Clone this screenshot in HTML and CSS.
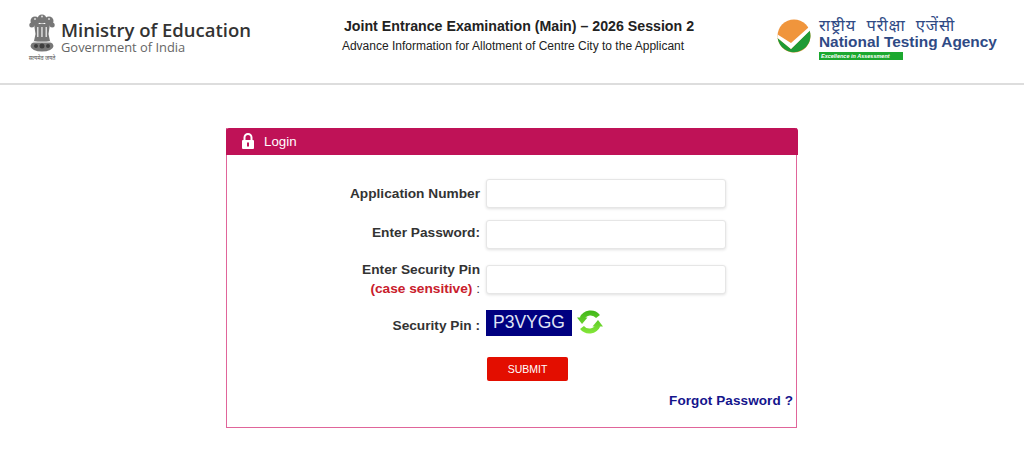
FILE: index.html
```html
<!DOCTYPE html>
<html>
<head>
    <title>JEE (Main) - Advance Information for Allotment of Centre City</title>
    <link rel="stylesheet" href="styles.css">
</head>
<body>
    <header class="site-header">
        <div class="moe-logo">
            <div class="emblem-box">
                <svg width="26" height="40" viewBox="0 0 26 40">
                    <g fill="#777">
                        <circle cx="13" cy="5" r="4.500"/>
                        <circle cx="6" cy="7" r="4.500"/>
                        <circle cx="20" cy="7" r="4.500"/>
                        <circle cx="2.800" cy="11" r="2.500"/>
                        <circle cx="23.200" cy="11" r="2.500"/>
                        <path d="M5 10h16l-1.500 10 1.500 7H5l1.500-7z"/>
                        <ellipse cx="13" cy="32" rx="11.500" ry="5.500"/>
                    </g>
                    <g fill="#dcdcdc">
                        <rect x="8" y="13" width="1.500" height="10"/>
                        <rect x="12.200" y="13" width="1.500" height="10"/>
                        <rect x="16.500" y="13" width="1.500" height="10"/>
                        <circle cx="13" cy="2.500" r="1"/>
                        <circle cx="6" cy="5" r="1"/>
                        <circle cx="20" cy="5" r="1"/>
                        <rect x="4" y="27.500" width="18" height="1.200"/>
                    </g>
                    <g fill="#3e3e3e">
                        <circle cx="7" cy="32" r="2"/>
                        <circle cx="13" cy="32" r="2.500"/>
                        <circle cx="19" cy="32" r="2"/>
                    </g>
                </svg>
                <div class="emblem-caption">सत्यमेव जयते</div>
            </div>
            <div class="moe-text">
                <div class="moe-title">Ministry of Education</div>
                <div class="moe-sub">Government of India</div>
            </div>
        </div>
        <div class="exam-title">
            <div class="exam-name">Joint Entrance Examination (Main) – 2026 Session 2</div>
            <div class="exam-desc">Advance Information for Allotment of Centre City to the Applicant</div>
        </div>
        <div class="nta-logo">
            <svg width="34" height="34" viewBox="0 0 34 34">
                <circle cx="17" cy="17" r="16.500" fill="#f0953c"/>
                <path d="M.6 19L14 30 32.600 11.500A16.500 16.500 0 1 1 .6 19z" fill="#1f9a35"/>
                <path d="M.6 15.500L14 24 32 8l1 3.500L14 30 .6 19z" fill="#fff"/>
            </svg>
            <div class="nta-text">
                <div class="nta-hindi">राष्ट्रीय परीक्षा एजेंसी</div>
                <div class="nta-name">National Testing Agency</div>
                <div class="nta-tag">Excellence in Assessment</div>
            </div>
        </div>
    </header>

    <div class="login-box">
        <div class="login-head">
            <svg width="12" height="16" viewBox="0 0 12 16">
                <path d="M2.500 7V4.500a3.500 3.500 0 0 1 7 0V7" fill="none" stroke="#fff" stroke-width="2"/>
                <rect x="0" y="7" width="12" height="9" rx="1" fill="#fff"/>
                <rect x="5" y="9.500" width="2" height="4" fill="#bf1257"/>
            </svg>
            <span>Login</span>
        </div>
        <form class="login-body">
            <div class="row row-first">
                <label class="label">Application Number</label>
                <input class="field" type="text">
            </div>
            <div class="row row-second">
                <label class="label">Enter Password:</label>
                <input class="field" type="password">
            </div>
            <div class="row row-pin">
                <label class="label">Enter Security Pin<br><span class="case-note">(case sensitive)</span> <span class="colon">:</span></label>
                <input class="field" type="text">
            </div>
            <div class="row row-captcha">
                <label class="label">Security Pin :</label>
                <div class="captcha">P3VYGG</div>
                <svg class="refresh" width="28" height="28" viewBox="0 0 28 28">
                    <defs>
                        <linearGradient id="refresh-green" gradientUnits="userSpaceOnUse" x1="0" y1="2" x2="0" y2="26">
                            <stop offset="0" stop-color="#3fb518"/>
                            <stop offset="1" stop-color="#86e83a"/>
                        </linearGradient>
                    </defs>
                    <g fill="none" stroke="url(#refresh-green)" stroke-width="5">
                        <path d="M22 8.500A9.500 9.500 0 0 0 6 10.500"/>
                        <path d="M6 19.500A9.500 9.500 0 0 0 22 17.500"/>
                    </g>
                    <g fill="url(#refresh-green)">
                        <path d="M1 9.500h10.500L6 16z"/>
                        <path d="M27 18.500H16.500L22 12z"/>
                    </g>
                </svg>
            </div>
            <div class="row row-submit">
                <button class="submit" type="button">SUBMIT</button>
            </div>
            <div class="forgot"><a href="#">Forgot Password ?</a></div>
        </form>
    </div>
</body>
</html>
```

FILE: styles.css
```css
* { box-sizing: border-box; }
body { margin: 0; background: #fff; font-family: "Liberation Sans", Arial, sans-serif; color: #333; overflow: hidden; }

.site-header { height: 85px; border-bottom: 2px solid #ddd; display: flex; align-items: flex-start; padding-left: 26px; }
.moe-logo { width: 290px; display: flex; gap: 3px; padding-top: 14px; }
.emblem-box { width: 32px; display: flex; flex-direction: column; align-items: center; }
.emblem-caption { font-family: "Noto Sans", "DejaVu Sans", sans-serif; font-size: 5.500px; line-height: 7px; color: #555; white-space: nowrap; margin-top: 1px; }
.moe-text { padding-top: 6px; }
.moe-title { font-family: "Open Sans", sans-serif; font-weight: 600; font-size: 18.500px; line-height: 20px; color: #333; }
.moe-sub { font-family: "Open Sans", sans-serif; font-size: 12.900px; line-height: 15px; color: #666; }
.exam-title { width: 394px; padding-top: 17px; text-align: center; }
.exam-name { font-weight: bold; font-size: 14.200px; line-height: 18px; color: #222; white-space: nowrap; padding-left: 12px; }
.exam-desc { font-size: 12px; line-height: 16px; margin-top: 3px; color: #222; white-space: nowrap; }
.nta-logo { display: flex; gap: 8px; padding: 19px 0 0 67px; }
.nta-text { margin-top: -3px; }
.nta-hindi { font-family: "Noto Sans", "DejaVu Sans", sans-serif; font-size: 16.500px; line-height: 17px; color: #2f4a85; letter-spacing: 0.9px; word-spacing: 5px; white-space: nowrap; }
.nta-name { font-weight: bold; font-size: 15.400px; line-height: 18px; color: #2f4a85; white-space: nowrap; }
.nta-tag { width: 84px; height: 8px; background: #1ca82f; color: #fff; font-size: 5.500px; line-height: 8px; font-style: italic; font-weight: bold; padding-left: 2px; white-space: nowrap; overflow: hidden; margin-top: 1px; }

.login-box { width: 571px; height: 300px; margin: 43px 0 0 226px; border: 1px solid #e0659a; border-top: 0; }
.login-head { width: 572px; height: 27px; background: #bf1257; border-radius: 3px 3px 0 0; margin-left: -1px; display: flex; align-items: center; gap: 10px; padding: 0 0 1px 16px; color: #fff; font-size: 13.300px; }

.login-body { display: flex; flex-direction: column; }
.row { display: flex; align-items: center; gap: 6px; }
.row-first { margin-top: 24px; }
.row-second { margin-top: 12px; }
.row-second .label { padding-bottom: 4px; }
.row-pin { margin-top: 11px; }
.row-captcha { margin-top: 12px; }
.row-captcha .label { padding-top: 4px; }
.row-submit { margin-top: 21px; padding-left: 260px; }
.label { width: 253px; text-align: right; font-weight: bold; font-size: 13.700px; line-height: 19px; color: #333; }
.case-note { color: #c9202c; }
.colon { font-weight: normal; }
.field { width: 240px; height: 29px; border: 1px solid #e6e6e6; border-radius: 3px; background: #fff; box-shadow: 0 1px 3px rgba(0, 0, 0, 0.12); }
.captcha { width: 86px; height: 26px; background: #000080; color: #dfe3f5; font-size: 17.500px; line-height: 25px; text-align: center; }
.refresh { margin: -2px 0 0 -2px; }
.submit { width: 81px; height: 24px; background: #e30e00; color: #fff; border: 0; border-radius: 2px; font-family: "Liberation Sans", Arial, sans-serif; font-size: 10.500px; padding: 0; }
.forgot { margin-top: 11px; padding-right: 3px; text-align: right; font-size: 13.500px; line-height: 18px; font-weight: bold; letter-spacing: 0.1px; }
.forgot a { color: #14148c; text-decoration: none; }
```
